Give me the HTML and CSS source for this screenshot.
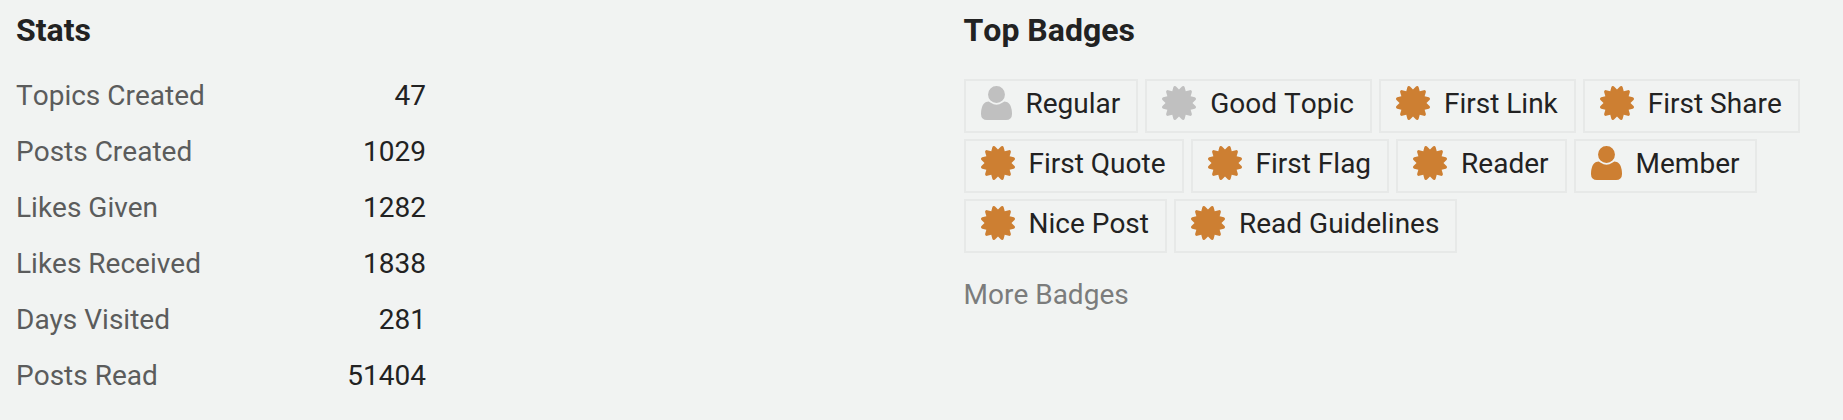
FILE: index.html
```
<!DOCTYPE html>
<html lang="en">
<head>
<meta charset="utf-8">
<title>User summary</title>
<link rel="stylesheet" href="styles.css">
</head>
<body>
<svg class="sprite" aria-hidden="true">
  <symbol id="user" viewBox="0 0 1408 1536"><path d="M1408 1277q0 120-73 189.500t-194 69.500h-874q-121 0-194-69.500t-73-189.500q0-53 3.500-103.500t14-109 26.500-108.500 43-97.500 62-81 85.500-53.500 111.500-20q9 0 42 21.500t74.500 48 108 48 133.500 21.500 133.500-21.500 108-48 74.500-48 42-21.500q61 0 111.500 20t85.500 53.500 62 81 43 97.500 26.500 108.500 14 109 3.500 103.500zM1088 384q0 159-112.500 271.500t-271.500 112.500-271.500-112.500-112.500-271.500 112.500-271.500 271.500-112.500 271.500 112.500 112.500 271.500z"/></symbol>
  <symbol id="certificate" viewBox="0 0 1536 1536"><path d="M1376 768l138 135q30 28 20 70-12 41-52 51l-188 48 53 186q12 41-19 70-29 31-70 19l-186-53-48 188q-10 40-51 52-12 2-19 2-31 0-51-22l-135-138-135 138q-28 30-70 20-41-11-51-52l-48-188-186 53q-41 12-70-19-31-29-19-70l53-186-188-48q-40-10-52-51-10-42 20-70l138-135-138-135q-30-28-20-70 12-41 52-51l188-48-53-186q-12-41 19-70 29-31 70-19l186 53 48-188q10-41 51-51 41-12 70 19l135 139 135-139q29-30 70-19 41 10 51 51l48 188 186-53q41-12 70 19 31 29 19 70l-53 186 188 48q40 10 52 51 10 42-20 70z"/></symbol>
</svg>
<main class="summary">
  <section class="stats">
    <h2 class="title">Stats</h2>
    <table class="stats-table">
      <tr><th scope="row">Topics Created</th><td>47</td></tr>
      <tr><th scope="row">Posts Created</th><td>1029</td></tr>
      <tr><th scope="row">Likes Given</th><td>1282</td></tr>
      <tr><th scope="row">Likes Received</th><td>1838</td></tr>
      <tr><th scope="row">Days Visited</th><td>281</td></tr>
      <tr><th scope="row">Posts Read</th><td>51404</td></tr>
    </table>
  </section>
  <section class="badges">
    <h2 class="title">Top Badges</h2>
    <div class="badge-list">
      <a class="badge silver" href="#"><svg class="icon icon-user"><use href="#user"/></svg>Regular</a>
      <a class="badge silver" href="#"><svg class="icon"><use href="#certificate"/></svg>Good Topic</a>
      <a class="badge" href="#"><svg class="icon"><use href="#certificate"/></svg>First Link</a>
      <a class="badge" href="#"><svg class="icon"><use href="#certificate"/></svg>First Share</a>
      <a class="badge" href="#"><svg class="icon"><use href="#certificate"/></svg>First Quote</a>
      <a class="badge" href="#"><svg class="icon"><use href="#certificate"/></svg>First Flag</a>
      <a class="badge" href="#"><svg class="icon"><use href="#certificate"/></svg>Reader</a>
      <a class="badge" href="#"><svg class="icon icon-user"><use href="#user"/></svg>Member</a>
      <a class="badge" href="#"><svg class="icon"><use href="#certificate"/></svg>Nice Post</a>
      <a class="badge" href="#"><svg class="icon"><use href="#certificate"/></svg>Read Guidelines</a>
    </div>
    <a class="more" href="#">More Badges</a>
  </section>
</main>
</body>
</html>
```
FILE: styles.css
```
body {
  margin: 0;
  background: #f1f3f2;
  color: #222;
  font-family: Roboto, sans-serif;
  font-size: 28px;
  font-kerning: none;
  line-height: 40px;
}

.sprite {
  display: none;
}

.summary {
  display: grid;
  grid-template-columns: 1fr 1fr;
  column-gap: 84px;
  padding: 10px 16px 0;
}

.title {
  margin: 0 0 29px;
  font-size: 32px;
  font-weight: 700;
  line-height: 40px;
}

.stats-table {
  width: 100%;
  max-width: 410px;
  margin-top: -11px;
  border-collapse: collapse;
}

.stats-table th,
.stats-table td {
  padding: 8px 0;
  font-weight: 400;
}

.stats-table th {
  color: #5b5c5c;
  text-align: left;
}

.stats-table td {
  text-align: right;
}

.badge-list {
  display: flex;
  flex-wrap: wrap;
  gap: 6px 7px;
}

.badge {
  display: flex;
  align-items: flex-start;
  gap: 14px;
  height: 47px;
  padding: 3px 16px 0 15px;
  border: 2px solid #e7e9e8;
  color: #222;
  text-decoration: none;
}

.icon {
  width: 34px;
  height: 34px;
  margin-top: 2px;
  fill: #cd7f32;
}

.icon-user {
  width: 31px;
}

.silver .icon {
  fill: #c0c0c0;
}

.more {
  display: inline-block;
  margin-top: 22px;
  color: #7b7c7c;
  text-decoration: none;
}
```
